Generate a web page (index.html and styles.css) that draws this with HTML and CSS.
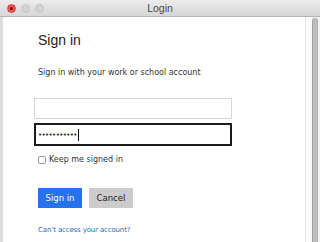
FILE: index.html
```html
<!DOCTYPE html>
<html>
<head>
<meta charset="utf-8">
<link rel="stylesheet" href="styles.css">
</head>
<body>
<div class="window">
  <div class="titlebar">
    <div class="lights">
      <span class="light close"></span>
      <span class="light idle"></span>
      <span class="light idle"></span>
    </div>
    <div class="title">Login</div>
  </div>
  <div class="main">
    <div class="edge"></div>
    <div class="content">
      <h1 class="heading">Sign in</h1>
      <p class="sub">Sign in with your work or school account</p>
      <div class="field user"></div>
      <div class="field pass"><span class="dots">•••••••••••</span><span class="caret"></span></div>
      <label class="keep"><span class="box"></span>Keep me signed in</label>
      <div class="buttons">
        <span class="btn primary">Sign in</span>
        <span class="btn secondary">Cancel</span>
      </div>
      <a class="link">Can’t access your account?</a>
    </div>
    <div class="gutter"></div>
    <div class="rail"><div class="bar"></div></div>
  </div>
</div>
</body>
</html>
```

FILE: styles.css
```css
* { box-sizing: border-box; }
html, body { margin: 0; padding: 0; }
body { width: 320px; height: 242px; overflow: hidden; background: #fff; font-family: "DejaVu Sans", Verdana, sans-serif; }
.window { display: grid; grid-template-rows: 17px 225px; width: 320px; height: 242px; }
.titlebar {
  position: relative;
  background: linear-gradient(#ececec, #d6d6d6);
  border-bottom: 1px solid #b4b4b4;
  display: flex; align-items: center; justify-content: center;
}
.lights { position: absolute; left: 7px; top: 4px; display: flex; gap: 5px; }
.light { width: 9px; height: 9px; border-radius: 50%; display: block; }
.close { background: radial-gradient(circle at 50% 50%, #8a0e0e 0 1.3px, #f2514d 1.7px); border: 1px solid #d8403c; }
.idle { background: #d2d2d2; border: 1px solid #c4c4c4; }
.title { font-family: "Liberation Sans", Arial, sans-serif; font-size: 10.5px; color: #4a4a4a; line-height: 16px; }
.main { display: grid; grid-template-columns: 3px 302px 7px 8px; }
.edge { background: #dcdcdc; }
.content { padding: 15px 0 0 35px; display: flex; flex-direction: column; align-items: flex-start; }
.heading { font-family: "Liberation Sans", Arial, sans-serif; font-weight: normal; font-size: 14px; color: #222; margin: 0; line-height: 17px; }
.sub { font-size: 8px; color: #333; margin: 18px 0 0 0; line-height: 12px; }
.field { width: 198px; margin-left: -4px; }
.user { height: 21px; border: 1px solid #d6d6d6; margin-top: 19px; }
.pass { height: 23px; border: 2px solid #1c1c1c; margin-top: 4px; display: flex; align-items: center; padding-left: 2px; }
.dots { font-size: 7px; color: #222; letter-spacing: -0.6px; line-height: 10px; }
.caret { width: 1px; height: 12px; background: #111; margin-left: 1px; }
.keep { display: flex; align-items: center; font-size: 8px; color: #333; margin-top: 8px; margin-left: 0; line-height: 12px; }
.box { width: 8px; height: 8px; border: 1px solid #999; border-radius: 2px; margin-right: 3px; background: #fff; }
.buttons { display: flex; gap: 7px; margin-top: 22px; }
.btn { height: 20px; width: 44px; display: flex; align-items: center; justify-content: center; font-size: 8.5px; }
.primary { background: #2672ec; color: #fff; }
.secondary { background: #cccccc; color: #222; }
.link { font-size: 7px; letter-spacing: -0.15px; color: #2a6cc0; margin-top: 17px; line-height: 10px; }
.gutter { border-left: 1px solid #e4e4e4; background: #fbfbfb; }
.rail { background: #f2f2f2; padding: 1px 2px 0 0; display: flex; }
.bar { flex: 1; background: #bdbdbd; border-left: 1px solid #a4a4a4; border-right: 1px solid #b0b0b0; border-radius: 3px 3px 0 0; }
```
